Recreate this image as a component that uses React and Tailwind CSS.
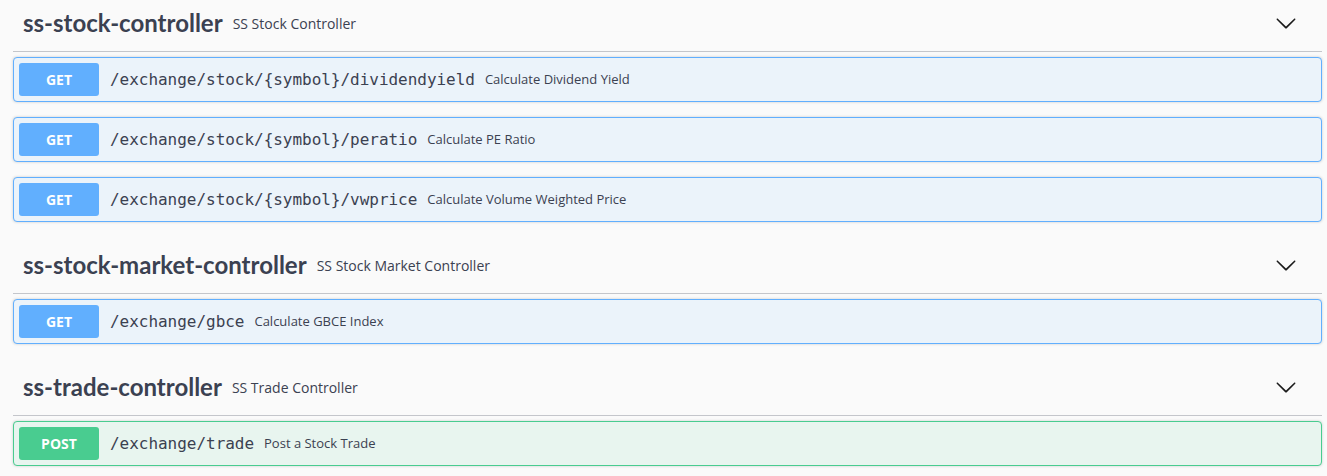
import React from "react";

const Chevron = () => (
  <svg width="22" height="22" viewBox="0 0 20 20" className="shrink-0">
    <path
      fill="#1b1b1b"
      d="M17.418 6.109c.272-.268.709-.268.979 0s.271.701 0 .969l-7.908 7.83c-.27.268-.707.268-.979 0l-7.908-7.83c-.27-.268-.27-.701 0-.969.271-.268.709-.268.979 0L10 13.25l7.418-7.141z"
    />
  </svg>
);

const Op = ({ method, path, desc }) => {
  const isPost = method === "POST";
  return (
    <div
      className={`mb-[15px] flex h-[45px] items-center rounded-[4px] border p-[5px] shadow-[0_0_3px_rgba(0,0,0,0.19)] ${
        isPost ? "border-[#49cc90] bg-[#e8f5ef]" : "border-[#61affe] bg-[#ebf3fa]"
      }`}
    >
      <div
        className={`flex h-[33px] w-[80px] shrink-0 items-center justify-center rounded-[3px] text-[14px] font-bold text-white ${
          isPost ? "bg-[#49cc90]" : "bg-[#61affe]"
        }`}
        style={{ fontFamily: "'Open Sans', sans-serif" }}
      >
        {method}
      </div>
      <span
        className="pl-[11px] pr-[10px] text-[16px] font-normal tracking-[-0.03px] text-[#3b4151]"
        style={{ fontFamily: "'DejaVu Sans Mono', 'Liberation Mono', monospace" }}
      >
        {path}
      </span>
      <span
        className="text-[13px] text-[#3b4151]"
        style={{ fontFamily: "'Open Sans', sans-serif" }}
      >
        {desc}
      </span>
    </div>
  );
};

const Section = ({ name, sub, ops }) => (
  <div>
    <div className="flex h-[57px] items-center border-b border-[#c4c6cb] pl-[10px] pr-[25px]">
      <span
        className="text-[24px] font-bold text-[#3b4151]"
        style={{ fontFamily: "Lato, 'Open Sans', sans-serif" }}
      >
        {name}
      </span>
      <span
        className="pl-[10px] text-[14px] text-[#3b4151]"
        style={{ fontFamily: "'Open Sans', sans-serif" }}
      >
        {sub}
      </span>
      <div className="ml-auto">
        <Chevron />
      </div>
    </div>
    <div className="mt-[5px]">
      {ops.map((o) => (
        <Op key={o.path} {...o} />
      ))}
    </div>
  </div>
);

export default function App() {
  return (
    <div className="h-[476px] w-full overflow-hidden bg-[#fafafa]">
      <div className="-mt-[5px] pl-[13px] pr-[5px]">
        <Section
          name="ss-stock-controller"
          sub="SS Stock Controller"
          ops={[
            { method: "GET", path: "/exchange/stock/{symbol}/dividendyield", desc: "Calculate Dividend Yield" },
            { method: "GET", path: "/exchange/stock/{symbol}/peratio", desc: "Calculate PE Ratio" },
            { method: "GET", path: "/exchange/stock/{symbol}/vwprice", desc: "Calculate Volume Weighted Price" },
          ]}
        />
        <Section
          name="ss-stock-market-controller"
          sub="SS Stock Market Controller"
          ops={[{ method: "GET", path: "/exchange/gbce", desc: "Calculate GBCE Index" }]}
        />
        <Section
          name="ss-trade-controller"
          sub="SS Trade Controller"
          ops={[{ method: "POST", path: "/exchange/trade", desc: "Post a Stock Trade" }]}
        />
      </div>
    </div>
  );
}
